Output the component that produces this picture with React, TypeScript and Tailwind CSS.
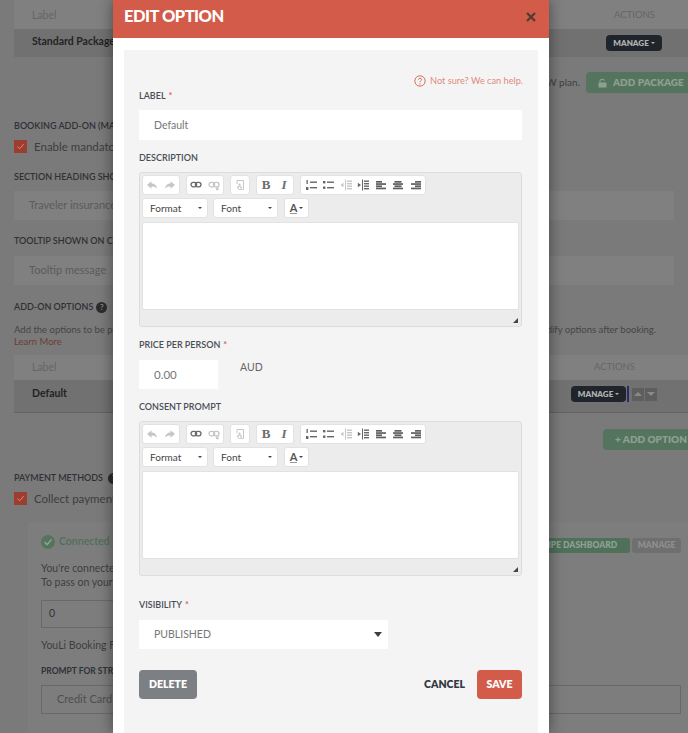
import React from "react";

const Off = "#c4c6c8";

function I({ children, w = 12 }: { children: React.ReactNode; w?: number }) {
  return (
    <svg width={w} height="12" viewBox="0 0 12 12" className="block shrink-0">
      {children}
    </svg>
  );
}

const Undo = () => (
  <I><path d="M1 6 L5.5 2.2 V4.6 C8.8 4.6 10.6 6.6 11 9.6 C9.6 7.9 8 7.4 5.5 7.4 V9.8 Z" fill={Off} /></I>
);
const Redo = () => (
  <I><path d="M11 6 L6.5 2.2 V4.6 C3.2 4.6 1.4 6.6 1 9.6 C2.4 7.9 4 7.4 6.5 7.4 V9.8 Z" fill={Off} /></I>
);
const LinkI = ({ off }: { off?: boolean }) => (
  <I>
    <g fill="none" stroke={off ? Off : "#6a6a6a"} strokeWidth="1.3">
      <rect x="1" y="3.4" width="5.6" height="4.4" rx="2.2" />
      <rect x="5.4" y="3.4" width="5.6" height="4.4" rx="2.2" />
    </g>
    {off && <path d="M8 8.5 L10.5 11 M10.5 8.5 L8 11" stroke={Off} strokeWidth="1.1" />}
  </I>
);
const Paste = () => (
  <I w={12}>
    <path d="M3 1.5 H9.5 V10.5 H6.5 M3 1.5 V5" fill="none" stroke={Off} strokeWidth="1" />
    <path d="M5 5 V8 H3 L5.5 11 L8 8 H6 V5 Z" fill="none" stroke={Off} strokeWidth="1" />
  </I>
);
const Bold = () => (
  <span className="block w-3 text-center font-['Liberation_Serif',serif] text-[13px] leading-3 font-bold text-[#6a6d71]">B</span>
);
const Ital = () => (
  <span className="block w-3 text-center font-['Liberation_Serif',serif] text-[13px] leading-3 font-bold italic text-[#6a6d71]">I</span>
);
const Lines = ({ rows, color = "#666" }: { rows: [number, number, number][]; color?: string }) => (
  <>
    {rows.map(([x, y, w], i) => (
      <rect key={i} x={x} y={y} width={w} height="1.4" fill={color} />
    ))}
  </>
);
const OL = () => (
  <I>
    <Lines rows={[[5, 2.5, 7], [5, 8, 7]]} />
    <rect x="1.5" y="1" width="1.3" height="4" fill="#666" />
    <rect x="1" y="8" width="2.4" height="3" fill="#666" />
  </I>
);
const UL = () => (
  <I>
    <Lines rows={[[5, 2.5, 7], [5, 8, 7]]} />
    <rect x="1" y="2" width="2.4" height="2.4" fill="#666" />
    <rect x="1" y="7.5" width="2.4" height="2.4" fill="#666" />
  </I>
);
const Outdent = ({ off }: { off?: boolean }) => {
  const c = off ? Off : "#666";
  return (
    <I>
      <Lines color={c} rows={[[7, 1.5, 5], [7, 4, 5], [7, 6.5, 5], [7, 9, 5]]} />
      <rect x="5" y="0.5" width="1" height="11" fill={c} />
      <path d="M0.5 6 L3.5 3.8 V8.2 Z" fill={c} />
    </I>
  );
};
const Indent = () => (
  <I>
    <Lines rows={[[7, 1.5, 5], [7, 4, 5], [7, 6.5, 5], [7, 9, 5]]} />
    <rect x="5" y="0.5" width="1" height="11" fill="#666" />
    <path d="M4 6 L0.8 3.8 V8.2 Z" fill="#666" />
  </I>
);
const Align = ({ rows }: { rows: [number, number][] }) => (
  <I>
    {rows.map(([x, w], i) => (
      <rect key={i} x={x} y={2 + i * 2.2} width={w} height="1.7" fill="#5f5f5f" />
    ))}
  </I>
);

function Group({ children, gap = "gap-[6px]", className = "" }: { children: React.ReactNode; gap?: string; className?: string }) {
  return (
    <div className={`flex h-[20px] items-center justify-center rounded-[3px] border border-[#e2e2e2] bg-white ${gap} ${className}`}>
      {children}
    </div>
  );
}

function Caret() {
  return <span className="h-0 w-0 border-x-[2px] border-t-[2px] border-x-transparent border-t-[#444]" />;
}

function Editor() {
  return (
    <div className="flex h-[155px] w-[383px] flex-col rounded-[3px] border border-[#dcdcdc] bg-[#ececec] px-[2px] pt-[2px]">
      <div className="flex gap-[6px]">
        <Group className="w-[38px]"><Undo /><Redo /></Group>
        <Group className="w-[38px]"><LinkI /><LinkI off /></Group>
        <Group className="w-[20px]"><Paste /></Group>
        <Group className="w-[38px]"><Bold /><Ital /></Group>
        <Group className="w-[126px]" gap="gap-[5.5px]">
          <OL />
          <UL />
          <Outdent off />
          <Indent />
          <Align rows={[[1, 6], [1, 10], [1, 6], [1, 10]]} />
          <Align rows={[[2.5, 7], [1, 10], [2.5, 7], [1, 10]]} />
          <Align rows={[[5, 6], [1, 10], [5, 6], [1, 10]]} />
        </Group>
      </div>
      <div className="mt-[3px] flex gap-[5px] text-[10px] text-[#444]">
        <div className="flex h-[20px] w-[66px] items-center justify-between rounded-[3px] border border-[#e2e2e2] bg-white pr-[5px] pl-[7px]">
          <span>Format</span><Caret />
        </div>
        <div className="flex h-[20px] w-[65px] items-center justify-between rounded-[3px] border border-[#e2e2e2] bg-white pr-[5px] pl-[7px]">
          <span>Font</span><Caret />
        </div>
        <div className="ml-[1px] flex h-[20px] w-[25px] items-center justify-center gap-[2px] rounded-[3px] border border-[#e2e2e2] bg-white">
          <span className="border-b border-[#999] text-[11px] leading-[11px] font-bold text-[#555]">A</span><Caret />
        </div>
      </div>
      <div className="mt-[4px] h-[88px] w-[377px] rounded-[2px] border border-[#e2e2e2] bg-white" />
      <div className="flex flex-1 items-end justify-end pr-[1px] pb-[3px]">
        <svg width="5" height="5" viewBox="0 0 5 5" className="block"><path d="M5 0 V5 H0 Z" fill="#444" /></svg>
      </div>
    </div>
  );
}

function Label({ children, req, className = "" }: { children: React.ReactNode; req?: boolean; className?: string }) {
  return (
    <div className={`text-[9px] leading-[12px] font-semibold whitespace-nowrap text-[#4a4f57] ${className}`}>
      {children}
      {req && <span className="ml-[3px] text-[#d45c4a]">*</span>}
    </div>
  );
}

function Modal() {
  return (
    <div className="absolute top-0 left-[113px] flex h-[733px] w-[436px] flex-col overflow-hidden bg-white shadow-[0_0_14px_rgba(0,0,0,0.45)]">
      <div className="flex h-[38px] shrink-0 items-center justify-between bg-[#d25c49] pr-[13px] pb-[5px] pl-[11px]">
        <span className="text-[16.5px] font-black tracking-[-0.5px] text-white">EDIT OPTION</span>
        <svg width="10" height="10" viewBox="0 0 10 10" className="block"><path d="M1 1 L9 9 M9 1 L1 9" stroke="#4f3a36" strokeWidth="2.2" /></svg>
      </div>
      <div className="mx-[11px] mt-[12px] flex-1 bg-[#f4f4f4] px-[15px]">
        <div className="flex items-center justify-end gap-[4px] pt-[25px] text-[9.2px] leading-[12px] text-[#e08b7e]">
          <svg width="12" height="12" viewBox="0 0 12 12" className="block">
            <circle cx="6" cy="6" r="5.2" fill="none" stroke="#d9705f" strokeWidth="1" />
            <path d="M4.4 4.6 C4.4 2.8 7.6 2.8 7.6 4.6 C7.6 5.8 6 5.6 6 7.2" fill="none" stroke="#d9705f" strokeWidth="1" />
            <circle cx="6" cy="8.9" r="0.7" fill="#d9705f" />
          </svg>
          <span>Not sure? We can help.</span>
        </div>
        <Label req className="mt-[3px]">LABEL</Label>
        <div className="mt-[8px] flex h-[30px] w-[383px] items-center bg-white pt-[1px] pl-[15px] text-[10.5px] text-[#777]">Default</div>
        <Label className="mt-[12px] mb-[8px]">DESCRIPTION</Label>
        <Editor />
        <Label req className="mt-[12px]">PRICE PER PERSON</Label>
        <div className="mt-[9px] flex h-[29px] text-[11.5px] text-[#777]">
          <div className="flex h-[29px] w-[79px] items-center bg-white pl-[15px]">0.00</div>
          <span className="ml-[22px] text-[10.5px] leading-[14px] text-[#666]">AUD</span>
        </div>
        <Label className="mt-[12px] mb-[8px]">CONSENT PROMPT</Label>
        <Editor />
        <Label req className="mt-[23px]">VISIBILITY</Label>
        <div className="mt-[9px] flex h-[29px] w-[249px] items-center justify-between bg-white pr-[6px] pl-[15px] text-[10.5px] text-[#777]">
          <span>PUBLISHED</span>
          <span className="h-0 w-0 border-x-[4px] border-t-[5px] border-x-transparent border-t-[#3b3f45]" />
        </div>
        <div className="mt-[21px] flex h-[29px] w-[383px] items-center justify-between">
          <button className="h-[29px] w-[58px] rounded-[4px] bg-[#7c7f83] text-[10.5px] font-extrabold text-white">DELETE</button>
          <div className="flex items-center gap-[12px]">
            <span className="text-[10.5px] font-extrabold text-[#333a45]">CANCEL</span>
            <button className="h-[29px] w-[45px] rounded-[4px] bg-[#d25c49] text-[10.5px] font-extrabold text-white">SAVE</button>
          </div>
        </div>
      </div>
    </div>
  );
}

function Manage({ className = "" }: { className?: string }) {
  return (
    <span className={`flex h-[16px] w-[55px] items-center justify-center gap-[2px] rounded-[4px] bg-[#1f252b] text-[8px] font-extrabold text-[#b0b0b0] ${className}`}>
      MANAGE
      <span className="h-0 w-0 border-x-[2px] border-t-[2px] border-x-transparent border-t-[#b0b0b0]" />
    </span>
  );
}

function DimLabel({ children, className = "" }: { children: React.ReactNode; className?: string }) {
  return <div className={`text-[9px] leading-[12px] font-semibold whitespace-nowrap text-[#2f3136] ${className}`}>{children}</div>;
}

function DimInput({ children, className = "mt-[8px]" }: { children: React.ReactNode; className?: string }) {
  return <div className={`flex h-[29px] w-[660px] items-center bg-[#808080] pl-[15px] text-[11px] text-[#5b5b5b] ${className}`}>{children}</div>;
}

function Check() {
  return (
    <span className="flex h-[13px] w-[13px] shrink-0 items-center justify-center bg-[#9c3d2f]">
      <svg width="9" height="9" viewBox="0 0 9 9" className="block"><path d="M1.5 4.5 L3.7 6.8 L7.6 2" fill="none" stroke="#c98f86" strokeWidth="1" /></svg>
    </span>
  );
}

function Help({ className = "" }: { className?: string }) {
  return (
    <span className={`flex h-[11px] w-[11px] items-center justify-center rounded-full bg-[#2c2c2e] text-[8px] font-bold text-[#8a8a8a] ${className}`}>?</span>
  );
}

function Background() {
  return (
    <div className="h-[733px] overflow-hidden bg-[#7a7a7a] pl-[14px] text-[#3f3f3f]">
      <div className="flex h-[29px] items-center justify-between bg-[#808080] pt-[2px] pr-[33px] pl-[18px] text-[10.5px] text-[#666]">
        <span>Label</span><span className="text-[9.5px]">ACTIONS</span>
      </div>
      <div className="flex h-[28px] items-center justify-between bg-[#717171] pr-[26px] pl-[18px]">
        <span className="-translate-y-[1px] text-[10.5px] font-bold text-[#232323]">Standard Package</span>
        <Manage className="w-[56px]" />
      </div>
      <div className="mt-[15px] flex h-[21px] items-center justify-end gap-[6px] text-[10px] text-[#3f3f3f]">
        <span>NEW plan.</span>
        <span className="flex h-[21px] w-[102px] items-center gap-[6px] rounded-l-[4px] bg-[#54745e] pl-[12px] text-[10px] font-extrabold whitespace-nowrap text-[#8d9f93]">
          <svg width="9" height="10" viewBox="0 0 9 10" className="block shrink-0">
            <rect x="0.5" y="4.5" width="8" height="5" rx="0.6" fill="#8d9f93" />
            <path d="M2 4.5 V3 C2 0.8 5.8 0.8 6.4 2.6" fill="none" stroke="#8d9f93" strokeWidth="1.2" />
          </svg>
          ADD PACKAGE
        </span>
      </div>
      <DimLabel className="mt-[27px]">BOOKING ADD-ON (MANDATORY)</DimLabel>
      <div className="mt-[8px] flex items-center gap-[7px] text-[11.5px] leading-[13px] text-[#3d3d3d]">
        <Check /><span className="whitespace-nowrap">Enable mandatory add-on</span>
      </div>
      <DimLabel className="mt-[18px]">SECTION HEADING SHOWN</DimLabel>
      <DimInput>Traveler insurance</DimInput>
      <DimLabel className="mt-[15px]">TOOLTIP SHOWN ON CHECKBOX</DimLabel>
      <DimInput className="mt-[9px]">Tooltip message</DimInput>
      <div className="mt-[16px] flex h-[12px] items-center gap-[3px]">
        <DimLabel>ADD-ON OPTIONS</DimLabel><Help />
      </div>
      <div className="mt-[11px] flex justify-between pr-[32px] text-[9.5px] leading-[12px] whitespace-nowrap text-[#454545]">
        <span>Add the options to be presented</span>
        <span>modify options after booking.</span>
      </div>
      <div className="text-[9.5px] leading-[12px] text-[#6b3e35]">Learn More</div>
      <div className="mt-[7px] flex h-[25px] items-center justify-between bg-[#808080] pr-[53px] pl-[18px] text-[10.5px] text-[#666]">
        <span>Label</span><span className="text-[9.5px]">ACTIONS</span>
      </div>
      <div className="flex h-[33px] items-center justify-between border-b border-[#626262] bg-[#717171] pr-[31px] pl-[18px]">
        <span className="-translate-y-[2px] text-[10.5px] font-bold text-[#232323]">Default</span>
        <span className="flex -translate-y-[2px] items-center">
          <Manage />
          <span className="ml-[1px] h-[16px] w-[2px] bg-[#2b2a6b]" />
          <span className="ml-[3px] flex h-[13px] w-[12px] items-center justify-center bg-[#5e5e5e]">
            <span className="h-0 w-0 border-x-[4px] border-b-[4px] border-x-transparent border-b-[#8a8a8a]" />
          </span>
          <span className="ml-[1px] flex h-[13px] w-[12px] items-center justify-center bg-[#5e5e5e]">
            <span className="h-0 w-0 border-x-[4px] border-t-[4px] border-x-transparent border-t-[#8a8a8a]" />
          </span>
        </span>
      </div>
      <div className="mt-[16px] flex justify-end">
        <span className="flex h-[21px] w-[85px] items-center rounded-l-[4px] bg-[#54745e] pl-[12px] text-[10px] font-extrabold whitespace-nowrap text-[#8d9f93]">+ ADD OPTION</span>
      </div>
      <div className="mt-[22px] flex h-[12px] items-center gap-[5px]">
        <DimLabel>PAYMENT METHODS</DimLabel><Help />
      </div>
      <div className="mt-[8px] flex items-center gap-[7px] text-[11.5px] leading-[13px] text-[#3d3d3d]">
        <Check /><span className="whitespace-nowrap">Collect payments online</span>
      </div>
      <div className="mt-[17px] ml-[14px] h-[300px] bg-[#7d7d7d] pt-[16px] pr-[7px] pl-[13px]">
        <div className="flex h-[15px] items-center justify-between">
          <span className="flex -translate-y-[4px] items-center gap-[4px] text-[10.5px] font-semibold text-[#4f7059]">
            <svg width="14" height="14" viewBox="0 0 14 14" className="block">
              <circle cx="7" cy="7" r="7" fill="#54745e" />
              <path d="M3.5 7 L6 9.5 L10.5 4.5" fill="none" stroke="#8d9f93" strokeWidth="1.6" />
            </svg>
            Connected
          </span>
          <span className="flex gap-[2px] text-[8.5px] font-extrabold whitespace-nowrap">
            <span className="flex h-[15px] w-[110px] items-center justify-center rounded-[3px] bg-[#4f7059] text-[#8d9f93]">STRIPE DASHBOARD</span>
            <span className="flex h-[15px] w-[49px] items-center justify-center rounded-[3px] bg-[#6f6f6f] text-[#8e8e8e]">MANAGE</span>
          </span>
        </div>
        <div className="mt-[8px] text-[10.5px] leading-[14px] whitespace-nowrap text-[#3d3d3d]">
          <div>You're connected to Stripe.</div>
          <div>To pass on your fees, enter them</div>
        </div>
        <div className="mt-[11px] flex h-[28px] w-[200px] items-center border border-[#696969] pl-[7px] text-[10.5px] text-[#333]">0</div>
        <div className="mt-[11px] text-[10.5px] leading-[12px] whitespace-nowrap text-[#3d3d3d]">YouLi Booking Fee</div>
        <div className="mt-[15px] text-[8.5px] leading-[10px] font-bold whitespace-nowrap text-[#2f3136]">PROMPT FOR STRIPE</div>
        <div className="mt-[9px] flex h-[29px] w-[640px] items-center border border-[#696969] pl-[15px] text-[11px] text-[#4f4f4f]">Credit Card</div>
      </div>
    </div>
  );
}

export default function App() {
  return (
    <div className="relative h-[733px] w-[688px] overflow-hidden font-['Lato','Open_Sans',sans-serif]">
      <Background />
      <Modal />
    </div>
  );
}
